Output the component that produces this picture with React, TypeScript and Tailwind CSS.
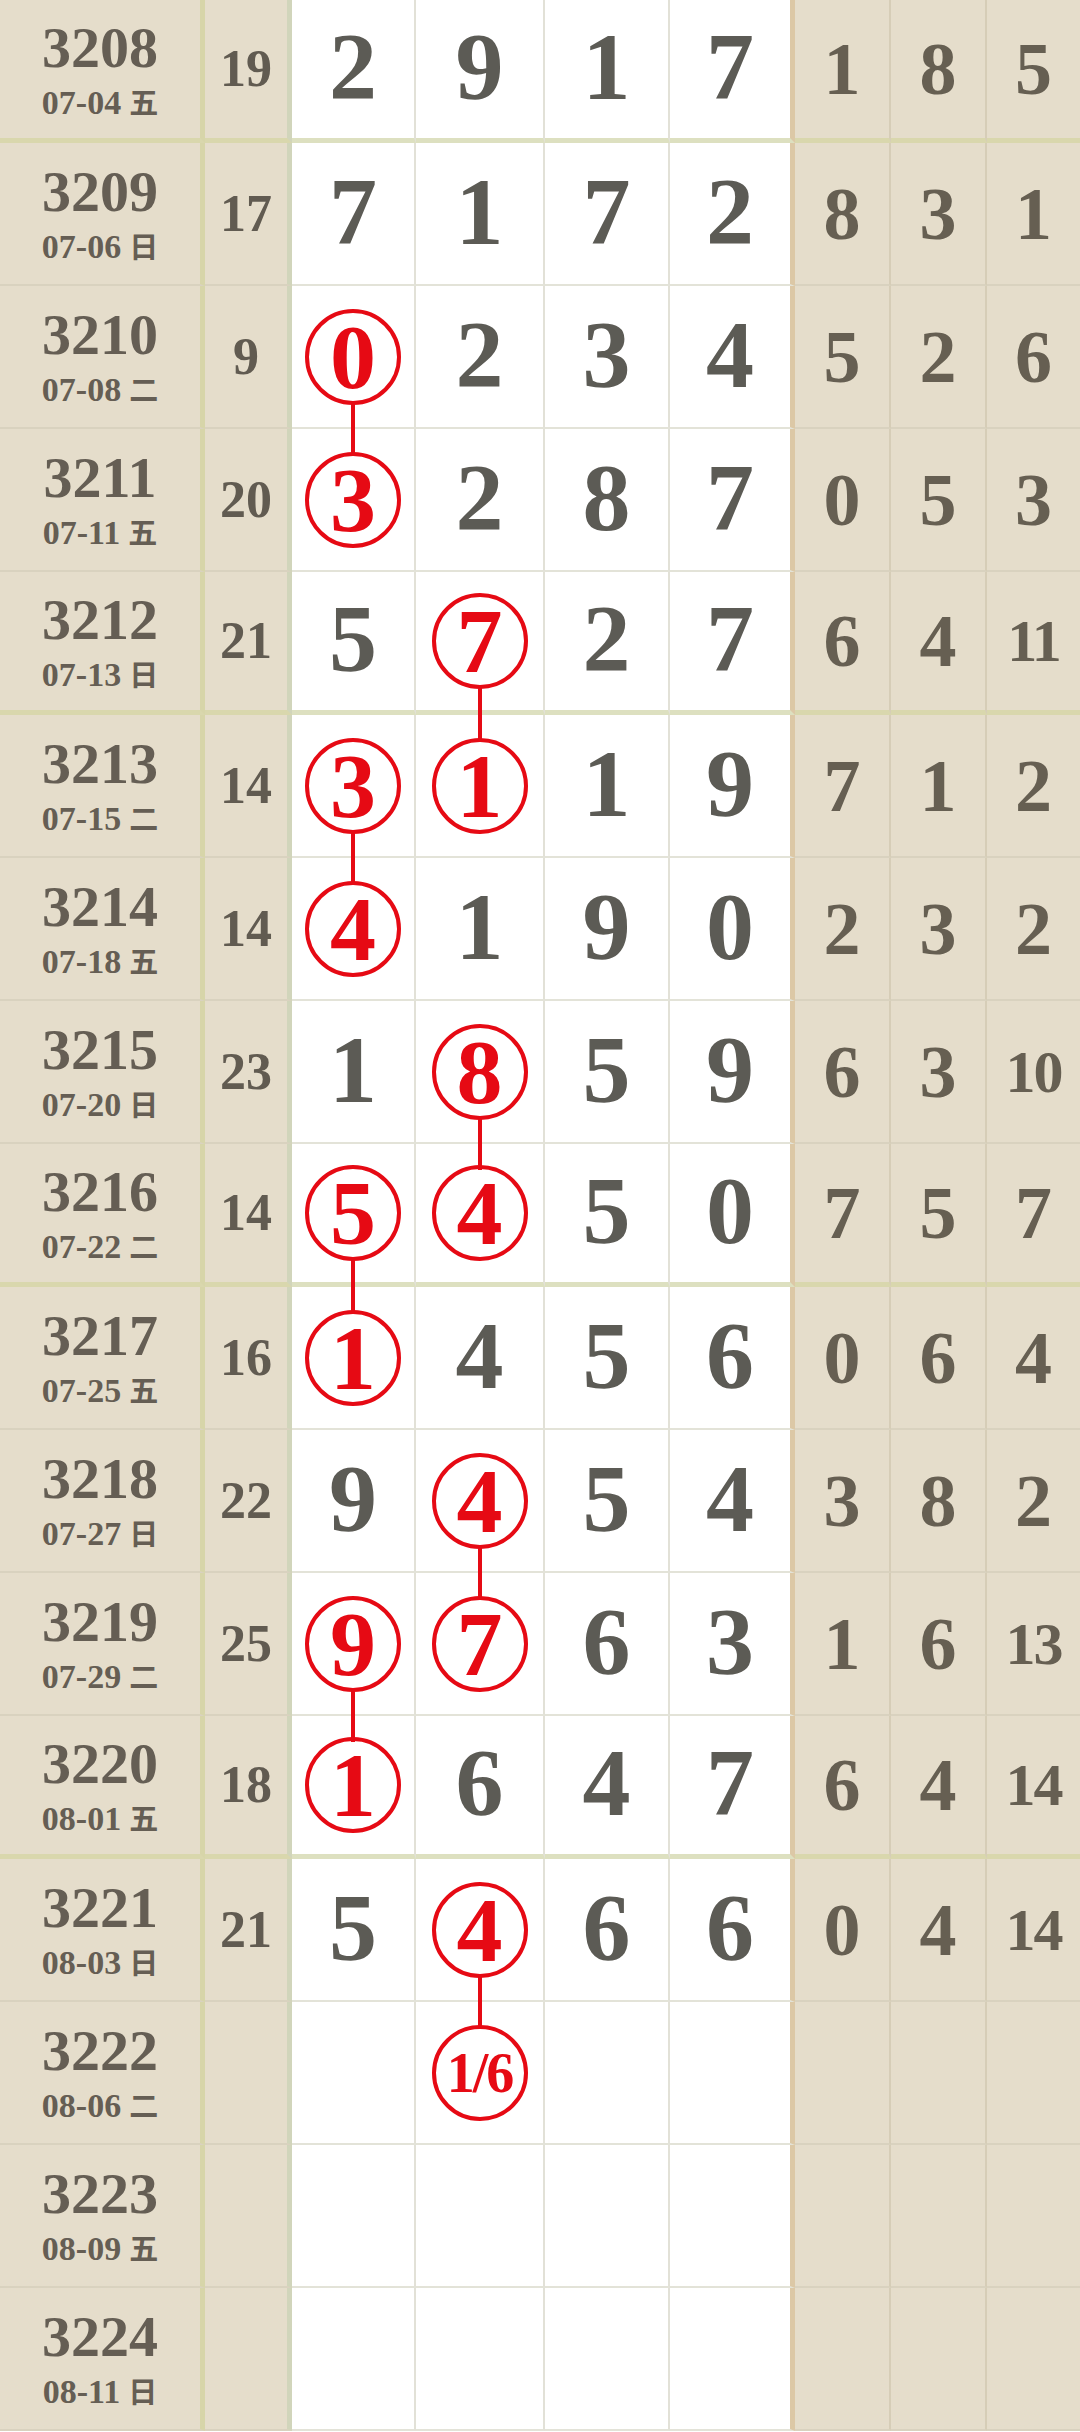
type Row = {
  no: string
  date: string
  wd: string
  sum?: string
  nums?: string[]
  tail?: string[]
  hits?: number[]
}

const rows: Row[] = [
  { no: "3208", date: "07-04", wd: "五", sum: "19", nums: ["2", "9", "1", "7"], tail: ["1", "8", "5"] },
  { no: "3209", date: "07-06", wd: "日", sum: "17", nums: ["7", "1", "7", "2"], tail: ["8", "3", "1"] },
  { no: "3210", date: "07-08", wd: "二", sum: "9", nums: ["0", "2", "3", "4"], tail: ["5", "2", "6"], hits: [0] },
  { no: "3211", date: "07-11", wd: "五", sum: "20", nums: ["3", "2", "8", "7"], tail: ["0", "5", "3"], hits: [0] },
  { no: "3212", date: "07-13", wd: "日", sum: "21", nums: ["5", "7", "2", "7"], tail: ["6", "4", "11"], hits: [1] },
  { no: "3213", date: "07-15", wd: "二", sum: "14", nums: ["3", "1", "1", "9"], tail: ["7", "1", "2"], hits: [0, 1] },
  { no: "3214", date: "07-18", wd: "五", sum: "14", nums: ["4", "1", "9", "0"], tail: ["2", "3", "2"], hits: [0] },
  { no: "3215", date: "07-20", wd: "日", sum: "23", nums: ["1", "8", "5", "9"], tail: ["6", "3", "10"], hits: [1] },
  { no: "3216", date: "07-22", wd: "二", sum: "14", nums: ["5", "4", "5", "0"], tail: ["7", "5", "7"], hits: [0, 1] },
  { no: "3217", date: "07-25", wd: "五", sum: "16", nums: ["1", "4", "5", "6"], tail: ["0", "6", "4"], hits: [0] },
  { no: "3218", date: "07-27", wd: "日", sum: "22", nums: ["9", "4", "5", "4"], tail: ["3", "8", "2"], hits: [1] },
  { no: "3219", date: "07-29", wd: "二", sum: "25", nums: ["9", "7", "6", "3"], tail: ["1", "6", "13"], hits: [0, 1] },
  { no: "3220", date: "08-01", wd: "五", sum: "18", nums: ["1", "6", "4", "7"], tail: ["6", "4", "14"], hits: [0] },
  { no: "3221", date: "08-03", wd: "日", sum: "21", nums: ["5", "4", "6", "6"], tail: ["0", "4", "14"], hits: [1] },
  { no: "3222", date: "08-06", wd: "二", nums: ["", "1/6", "", ""], hits: [1] },
  { no: "3223", date: "08-09", wd: "五" },
  { no: "3224", date: "08-11", wd: "日" },
]

const mainWidths = ["w-[124px]", "w-[129px]", "w-[125px]", "w-[125px]"]
const tailWidths = ["w-[96px]", "w-[96px]", "w-[93px]"]

const serif = "font-['Liberation_Serif',serif] font-bold"

function Circle({ value }: { value: string }) {
  const small = value.length > 1
  return (
    <div className="flex h-[96px] w-[96px] items-center justify-center rounded-full border-[4px] border-[#e60a14] bg-white">
      <span
        className={`${serif} leading-none text-[#e60a14] ${small ? "text-[56px] tracking-[-2px]" : "text-[92px]"}`}
      >
        {value}
      </span>
    </div>
  )
}

function MainCell({
  value,
  hit,
  linked,
  width,
  last,
  thick,
}: {
  value: string
  hit: boolean
  linked: boolean
  width: string
  last: boolean
  thick: boolean
}) {
  const right = last ? "border-r-[5px] border-r-[#dcc8a6]" : "border-r-2 border-r-[#e2e1d7]"
  const bottom = thick ? "border-b-[5px] border-b-[#dde0c0]" : "border-b-2 border-b-[#e3e3d8]"
  return (
    <div className={`relative flex h-full ${width} shrink-0 items-center justify-center bg-white ${right} ${bottom}`}>
      {hit ? (
        <Circle value={value} />
      ) : (
        <span className={`${serif} pb-[4px] text-[96px] leading-none text-[#5c5b55]`}>{value}</span>
      )}
      {linked && (
        <div className="absolute left-1/2 top-[calc(50%+46px)] z-10 h-[52px] w-[4px] -translate-x-1/2 bg-[#e60a14]" />
      )}
    </div>
  )
}

function LotteryRow({ row, next }: { row: Row; next?: Row }) {
  const idx = Number(row.no) - 3208
  const thick = idx % 4 === 0 && idx < 16
  const beigeBottom = thick ? "border-b-[5px] border-b-[#d9d7ad]" : "border-b-2 border-b-[#d9d2bf]"
  const nums = row.nums ?? ["", "", "", ""]
  const tail = row.tail ?? ["", "", ""]

  return (
    <div className="flex h-[143px]">
      <div
        className={`flex h-full w-[205px] shrink-0 flex-col items-center justify-center gap-[9px] bg-[#e5ddcb] border-r-[5px] border-r-[#d7d5a9] ${beigeBottom}`}
      >
        <span className={`${serif} text-[58px] leading-none text-[#655e54]`}>{row.no}</span>
        <span className="flex items-baseline gap-[8px] leading-none text-[#655e54]">
          <span className={`${serif} text-[34px]`}>{row.date}</span>
          <span className="font-['Noto_Sans_CJK_SC',sans-serif] text-[29px] font-bold">{row.wd}</span>
        </span>
      </div>
      <div
        className={`flex h-full w-[87px] shrink-0 items-center justify-center bg-[#e5ddcb] border-r-[5px] border-r-[#d1d5bb] ${beigeBottom}`}
      >
        <span className={`${serif} text-[52px] leading-none text-[#615b51]`}>{row.sum}</span>
      </div>
      {nums.map((n, i) => {
        const hit = row.hits?.includes(i) ?? false
        const linked = hit && (next?.hits?.includes(i) ?? false)
        return (
          <MainCell
            key={i}
            value={n}
            hit={hit}
            linked={linked}
            width={mainWidths[i]}
            last={i === 3}
            thick={thick}
          />
        )
      })}
      {tail.map((t, i) => (
        <div
          key={i}
          className={`flex h-full ${tailWidths[i]} shrink-0 items-center justify-center bg-[#e5ddcb] ${
            i < 2 ? "border-r-2 border-r-[#d6cdb7]" : ""
          } ${beigeBottom}`}
        >
          <span
            className={`${serif} leading-none text-[#665f52] ${t.length > 1 ? "text-[60px] tracking-[-2px]" : "text-[74px]"}`}
          >
            {t}
          </span>
        </div>
      ))}
    </div>
  )
}

export default function App() {
  return (
    <div className="w-[1080px] bg-white">
      <div className="h-[2px] w-[205px] bg-[#dcd6c4]" />
      <div className="-mt-[2px] flex flex-col [&>div]:box-border [&_div]:box-border">
        {rows.map((row, i) => (
          <LotteryRow key={row.no} row={row} next={rows[i + 1]} />
        ))}
      </div>
    </div>
  )
}
